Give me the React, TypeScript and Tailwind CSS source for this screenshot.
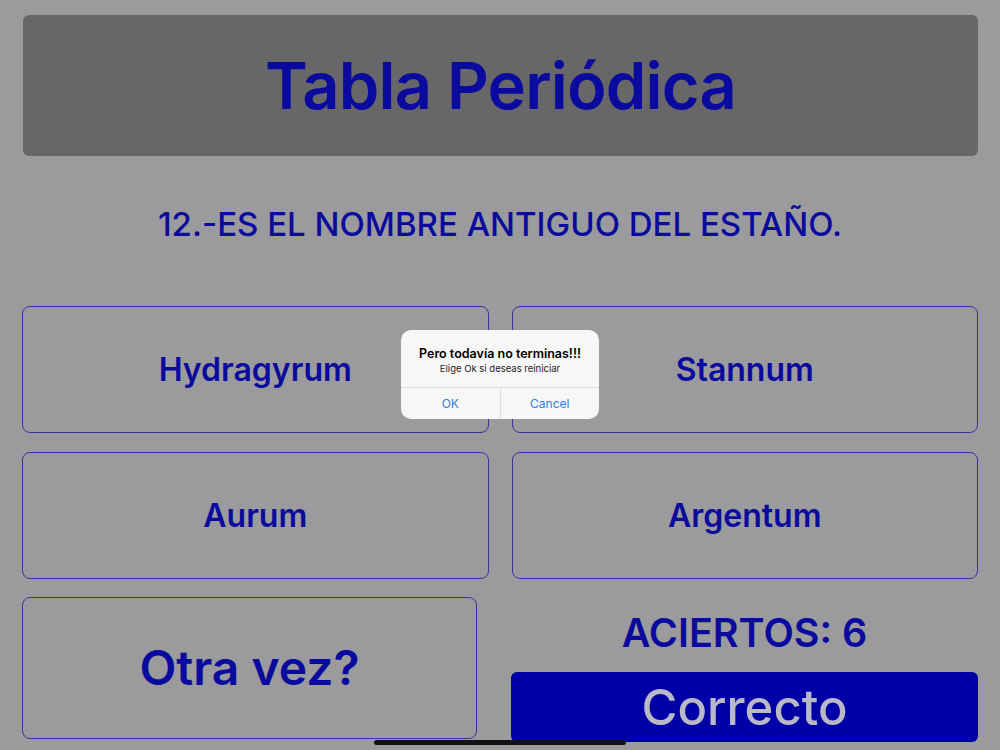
import React from 'react';

const options = [
  { id: 'a', label: 'Hydragyrum' },
  { id: 'b', label: 'Stannum' },
  { id: 'c', label: 'Aurum' },
  { id: 'd', label: 'Argentum' },
];

export default function App() {
  return (
    <div
      className="relative h-[750px] w-[1000px] overflow-hidden bg-[#9b9a9c]"
      style={{ fontFamily: 'Inter, "Liberation Sans", sans-serif' }}
    >
      <div className="flex flex-col px-[22px] pt-[15px]">
        <div className="ml-px flex h-[141px] items-center justify-center rounded-[6px] bg-[#676668]">
          <h1 className="text-[65px] font-semibold tracking-[-0.8px] text-[#0a0a9e]">Tabla Periódica</h1>
        </div>

        <p className="mt-[48px] text-center text-[33px] font-medium leading-[40px] text-[#0a0a9e]">
          12.-ES EL NOMBRE ANTIGUO DEL ESTAÑO.
        </p>

        <div className="mt-[62px] grid grid-cols-2 gap-x-[23px] gap-y-[19px]">
          {options.map(opt => (
            <button
              key={opt.id}
              className="flex h-[127px] items-center justify-center rounded-[8px] border border-[#3434a6] text-[32px] font-semibold text-[#0a0a9e]"
            >
              {opt.label}
            </button>
          ))}
        </div>

        <div className="mt-[18px] flex gap-[34px]">
          <button className="flex h-[142px] w-[455px] items-center justify-center rounded-[8px] border border-[#3434a6] text-[48px] font-semibold text-[#0a0a9e]">
            Otra vez?
          </button>
          <div className="flex flex-1 flex-col items-center">
            <p className="mt-[13px] text-[39.5px] font-semibold leading-[46px] text-[#0a0a9e]">ACIERTOS: 6</p>
            <div className="mt-[16px] flex h-[70px] w-full items-center justify-center rounded-[6px] bg-[#0000a6]">
              <span className="text-[49px] font-medium leading-none text-[#b9b8c6]">Correcto</span>
            </div>
          </div>
        </div>
      </div>

      {/* alert */}
      <div className="absolute left-[401px] top-[330px] w-[198px] overflow-hidden rounded-[10px] bg-[#f7f7f7]">
        <div className="flex flex-col items-center px-2 pt-[16px] pb-[12px]">
          <p className="text-[12.5px] font-semibold leading-[15px] text-black">Pero todavía no terminas!!!</p>
          <p className="mt-[2px] text-[9.5px] leading-[12px] text-[#222]">Elige Ok si deseas reiniciar</p>
        </div>
        <div className="flex h-[32px] border-t border-[#dcdcdc]">
          <button className="flex-1 text-[12px] text-[#2f7fe0]">OK</button>
          <button className="flex-1 border-l border-[#dcdcdc] text-[12px] text-[#2f7fe0]">Cancel</button>
        </div>
      </div>

      {/* home indicator */}
      <div className="absolute left-[374px] top-[740px] h-[5px] w-[252px] rounded-full bg-[#111]" />
    </div>
  );
}
